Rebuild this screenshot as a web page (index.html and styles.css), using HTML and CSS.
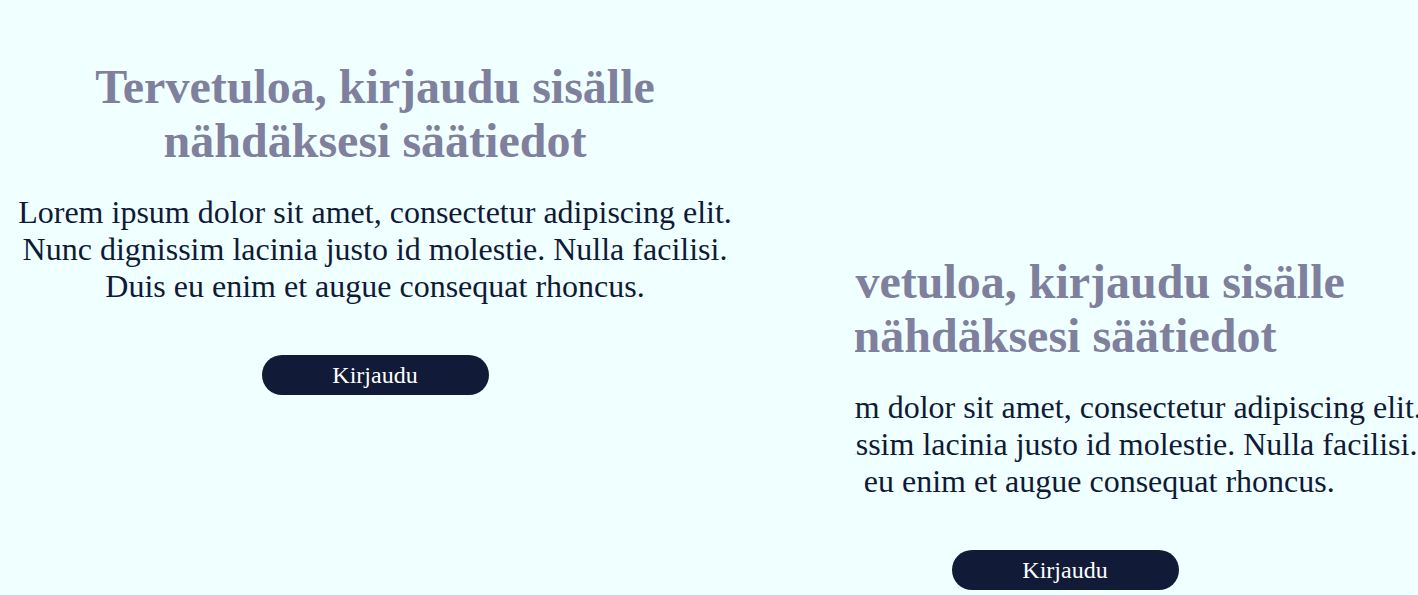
FILE: index.html
```html
<!DOCTYPE html>
<html lang="fi">
<head>
<meta charset="utf-8">
<title>Kirjaudu</title>
<link rel="stylesheet" href="styles.css">
</head>
<body>
<main class="page">
  <section class="intro">
    <h1 class="title">Tervetuloa, kirjaudu sisälle nähdäksesi säätiedot</h1>
    <p class="lead">Lorem ipsum dolor sit amet, consectetur adipiscing elit. Nunc dignissim lacinia justo id molestie. Nulla facilisi. Duis eu enim et augue consequat rhoncus.</p>
    <button class="btn" type="button">Kirjaudu</button>
  </section>
  <section class="preview">
    <div class="intro intro-copy">
      <h1 class="title">Tervetuloa, kirjaudu sisälle nähdäksesi säätiedot</h1>
      <p class="lead">Lorem ipsum dolor sit amet, consectetur adipiscing elit. Nunc dignissim lacinia justo id molestie. Nulla facilisi. Duis eu enim et augue consequat rhoncus.</p>
      <button class="btn" type="button">Kirjaudu</button>
    </div>
  </section>
</main>
</body>
</html>
```

FILE: styles.css
```css
html, body {
  margin: 0;
  padding: 0;
  background: #f0ffff;
  height: 100%;
  overflow: hidden;
}
body {
  font-family: "Liberation Serif", "Times New Roman", serif;
  color: #0f1a36;
}
.page {
  display: flex;
  width: 1418px;
  height: 595px;
}
.intro {
  width: 750px;
  flex: none;
  display: flex;
  flex-direction: column;
  align-items: center;
  text-align: center;
  padding-top: 60px;
}
.title {
  margin: 0;
  font-size: 48px;
  line-height: 54px;
  font-weight: bold;
  color: #7f809e;
  width: 620px;
}
.lead {
  margin: 26px 0 0;
  font-size: 32px;
  line-height: 37px;
}
.btn {
  margin-top: 50px;
  width: 227px;
  height: 40px;
  border: none;
  border-radius: 20px;
  background: #111a36;
  color: #fff;
  font-family: inherit;
  font-size: 24px;
}
.preview {
  margin-left: 105px;
  flex: 1;
  overflow: hidden;
}
.intro-copy {
  margin-left: -165px;
  padding-top: 255px;
}
```
